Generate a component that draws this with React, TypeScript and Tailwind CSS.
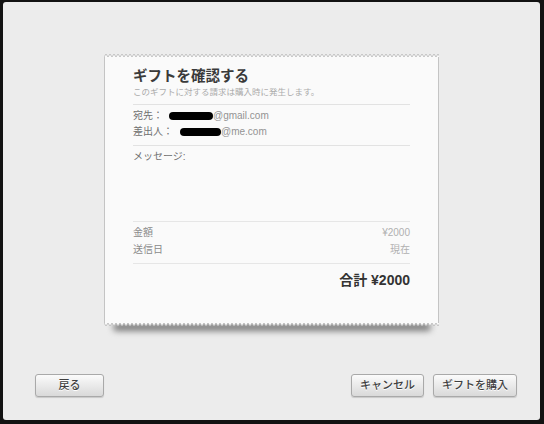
import React from 'react';

const font = { fontFamily: '"Liberation Sans", "Noto Sans CJK JP", sans-serif' };

// torn receipt edge: small teeth along the top or bottom of the slip
function TornEdge({ flip }: { flip?: boolean }) {
  const w = 335;
  const step = 4;
  const base = flip ? 0 : 4;
  const tip = flip ? 3 : 1;
  const teeth = Array.from({ length: Math.ceil(w / step) + 1 }, (_, i) => `${i === 0 ? 'M' : 'L'}${i * step} ${base} L${i * step + step / 2} ${tip}`).join(' ');
  return (
    <svg width={w} height={4} viewBox={`0 0 ${w} 4`} className="block">
      <path d={`${teeth} L${w} ${base} Z`} fill="#fafafa" />
      <path d={teeth} fill="none" stroke="#b9b9b9" strokeWidth={0.8} />
    </svg>
  );
}

function Redacted({ w }: { w: number }) {
  return <span className="inline-block h-[8px] rounded-full bg-black align-middle" style={{ width: w }} />;
}

function Button({ children, className }: { children: React.ReactNode; className?: string }) {
  return (
    <button
      className={`h-[23px] rounded-[3px] border border-[#a9a9a9] bg-gradient-to-b from-[#fbfbfb] to-[#d9d9d9] px-[8px] text-[11px] font-medium leading-none text-[#3f3f3f] shadow-[0_1px_1px_rgba(0,0,0,0.15)] [text-shadow:0_1px_0_#fff] ${className ?? ''}`}
    >
      {children}
    </button>
  );
}

export default function App() {
  return (
    <div className="w-[544px] h-[424px] bg-[#121212] pt-[2px] pl-[3px] pr-[4px] pb-[4px]" style={font}>
      <div className="flex h-full flex-col rounded-[3px] bg-[#ececec]">
        <div className="pt-[51px]">
          <div className="relative z-10 mx-auto w-[335px]">
            <TornEdge />
            <div className="flex h-[266px] flex-col border-x border-[#c4c4c4] bg-[#fafafa] px-[28px]">
              <div className="pt-[10px] text-[14.5px] font-bold leading-[18px] text-[#3a3a3a]">ギフトを確認する</div>
              <div className="mt-[1px] text-[8.5px] leading-[12px] text-[#ababab]">このギフトに対する請求は購入時に発生します。</div>
              <div className="mt-[6px] h-px bg-[#e2e2e2]" />
              <div className="mt-[3px] flex items-center gap-[6px] text-[10px] leading-[16px] text-[#707070]">
                <span>宛先：</span>
                <span className="text-[#939393]">
                  <Redacted w={44} />@gmail.com
                </span>
              </div>
              <div className="flex items-center gap-[7px] text-[10px] leading-[16px] text-[#707070]">
                <span>差出人：</span>
                <span className="text-[#939393]">
                  <Redacted w={41} />@me.com
                </span>
              </div>
              <div className="mt-[5px] h-px bg-[#e2e2e2]" />
              <div className="mt-[4px] text-[10px] leading-[14px] text-[#707070]">メッセージ:</div>
              <div className="mt-[57px] h-px bg-[#e6e6e6]" />
              <div className="mt-[2px] flex justify-between text-[10px] leading-[17px]">
                <span className="text-[#8a8a8a]">金額</span>
                <span className="text-[#b0b0b0]">¥2000</span>
              </div>
              <div className="flex justify-between text-[10px] leading-[17px]">
                <span className="text-[#8a8a8a]">送信日</span>
                <span className="text-[#b0b0b0]">現在</span>
              </div>
              <div className="mt-[5px] h-px bg-[#e6e6e6]" />
              <div className="mt-[6px] text-right text-[14px] font-bold leading-[20px] text-[#333]">合計 ¥2000</div>
            </div>
            <TornEdge flip />
          </div>
          <div className="mx-auto -mt-[4px] h-[8px] w-[318px] rounded-full bg-[#7a7a7a] blur-[3px]" />
        </div>
        <div className="flex-1" />
        <div className="flex items-center pb-[23px] pl-[32px] pr-[23px]">
          <Button className="w-[69px]">戻る</Button>
          <div className="flex-1" />
          <div className="flex gap-[9px]">
            <Button>キャンセル</Button>
            <Button>ギフトを購入</Button>
          </div>
        </div>
      </div>
    </div>
  );
}
